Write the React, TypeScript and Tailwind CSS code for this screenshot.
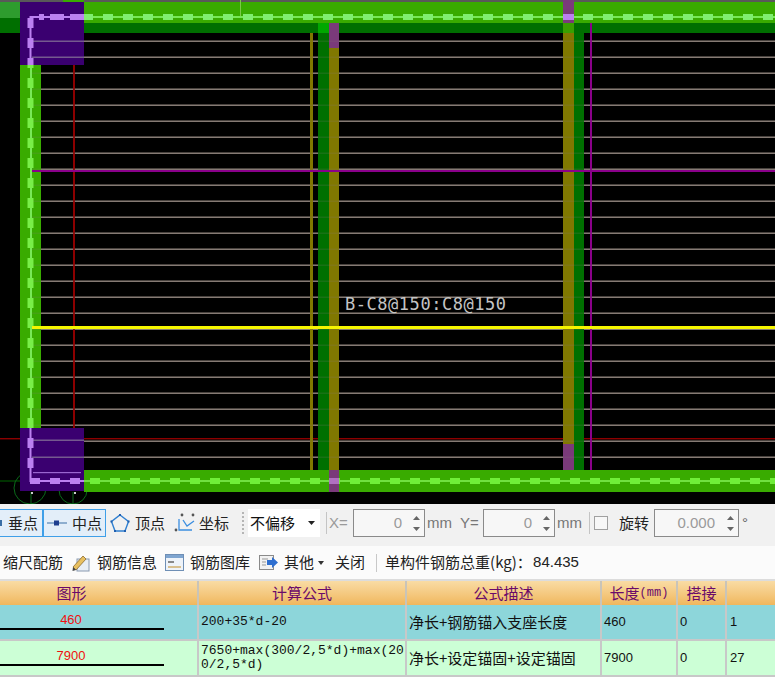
import React from "react";

const cjk = "font-['Microsoft_YaHei','Noto_Sans_CJK_SC',sans-serif]";
const latin = "font-['Liberation_Sans',sans-serif]";

const railLines = Array.from({ length: 27 }, (_, i) => 41 + i * 16);

// the CAD view, drawn as one picture
const CadCanvas = () => (
  <svg width="775" height="504" viewBox="0 0 775 504" className="block shrink-0 bg-black">
    {/* thin grey bars */}
    {railLines.map((y) => (
      <rect key={y} x="32" y={y - 0.5} width="743" height="1.5" fill="#857a74" />
    ))}
    {/* axis lines */}
    <rect x="0" y="438" width="775" height="1.4" fill="#8c0000" />
    <rect x="73" y="65" width="2" height="426" fill="#8c0000" />
    <rect x="0" y="480.5" width="20" height="1" fill="#006400" />

    {/* dimension arcs */}
    <g fill="none" stroke="#0a6a1a" strokeWidth="1">
      <circle cx="30" cy="488" r="16" />
      <circle cx="73" cy="490" r="14" />
      <line x1="31" y1="492" x2="31" y2="504" />
      <line x1="73" y1="492" x2="73" y2="504" />
    </g>

    {/* top beam */}
    <rect x="0" y="0" width="775" height="2" fill="#595959" />
    <rect x="63" y="0" width="21" height="2" fill="#39ab00" />
    <rect x="0" y="2" width="20" height="16" fill="#2e9c2e" />
    <rect x="0" y="18" width="20" height="15" fill="#006f00" />
    <rect x="20" y="2" width="755" height="21" fill="#39ab00" />
    <rect x="20" y="23" width="755" height="10" fill="#006f00" />
    <rect x="240" y="0" width="1" height="17" fill="#7cc84a" />

    {/* left column */}
    <rect x="20" y="65" width="21" height="363" fill="#39ab00" />

    {/* inner columns */}
    <rect x="310" y="33" width="3" height="437" fill="#807800" />
    <rect x="318" y="33" width="11" height="437" fill="#007000" />
    <rect x="318" y="23" width="11" height="10" fill="#00a800" />
    <rect x="329" y="48" width="10" height="422" fill="#807800" />
    <rect x="329" y="23" width="10" height="25" fill="#7a3a7a" />
    <rect x="563" y="33" width="11" height="411" fill="#807800" />
    <rect x="563" y="444" width="11" height="26" fill="#7a3a7a" />
    <rect x="563" y="0" width="11" height="23" fill="#7a3a7a" />
    <rect x="563" y="23" width="11" height="10" fill="#39a000" />
    <rect x="574" y="33" width="10" height="437" fill="#007000" />
    <rect x="590" y="23" width="2" height="447" fill="#8a008a" />

    {/* bars showing faintly through the columns */}
    {railLines.map((y) => (
      <rect key={y} x="32" y={y - 0.5} width="743" height="1.5" fill="#857a74" fillOpacity="0.18" />
    ))}

    {/* bottom beam */}
    <rect x="84" y="470" width="691" height="22" fill="#39ab00" />
    <rect x="329" y="470" width="10" height="22" fill="#7a3a7a" />

    {/* corner columns */}
    <rect x="20" y="2" width="64" height="63" fill="#3a0070" />
    <rect x="20" y="428" width="64" height="63" fill="#3a0070" />
    {[41, 57, 440, 457].map((y) => (
      <rect key={y} x="32" y={y - 0.5} width="52" height="1.5" fill="#75598f" />
    ))}
    <rect x="33" y="472" width="48" height="1.2" fill="#9a66d0" />

    {/* rebar, green parts */}
    <rect x="84" y="16" width="691" height="2" fill="#78e858" />
    <line x1="84" y1="17" x2="775" y2="17" stroke="#80ee70" strokeWidth="6" strokeDasharray="10 10" strokeDashoffset="1" />
    <rect x="30" y="65" width="2" height="363" fill="#78e858" />
    <line x1="30.5" y1="65" x2="30.5" y2="428" stroke="#78ee48" strokeWidth="6" strokeDasharray="10 10" strokeDashoffset="7" />
    <rect x="84" y="480" width="691" height="2" fill="#70e040" />
    <line x1="84" y1="481" x2="775" y2="481" stroke="#70ee38" strokeWidth="6" strokeDasharray="10 10" strokeDashoffset="-6" />

    {/* rebar, corner parts */}
    <path d="M84 17H30.5V65M30.5 428V481H84" fill="none" stroke="#bb80f0" strokeWidth="2" />
    <line x1="84" y1="17" x2="39" y2="17" stroke="#bb80f0" strokeWidth="6" strokeDasharray="14 6" />
    <line x1="30.5" y1="18" x2="30.5" y2="65" stroke="#bb80f0" strokeWidth="6" strokeDasharray="10 10" />
    <line x1="30.5" y1="438" x2="30.5" y2="472" stroke="#bb80f0" strokeWidth="6" strokeDasharray="10 10" />
    <line x1="30" y1="481" x2="84" y2="481" stroke="#bb80f0" strokeWidth="6" strokeDasharray="10 10" />

    <rect x="563" y="14" width="11" height="6" fill="#bb80f0" />
    <rect x="329" y="478" width="10" height="6" fill="#b070c0" />

    <rect x="31" y="492" width="2" height="2" fill="#cccccc" />
    <rect x="74" y="492" width="2" height="2" fill="#cccccc" />

    {/* overlay lines */}
    <rect x="32" y="170" width="743" height="2" fill="#8a008a" />
    <rect x="32" y="326" width="743" height="3" fill="#f5f500" />

    <text
      x="345"
      y="310"
      fill="#c4c4c4"
      fontFamily="'DejaVu Sans Mono', monospace"
      fontSize="17"
      textLength="161"
    >
      B-C8@150:C8@150
    </text>
  </svg>
);

const Spin = () => (
  <span className="flex w-[14px] flex-col items-center gap-[7px]">
    <svg width="7" height="4" viewBox="0 0 7 4"><path d="M0 4L3.5 0L7 4Z" fill="#666" /></svg>
    <svg width="7" height="4" viewBox="0 0 7 4"><path d="M0 0L3.5 4L7 0Z" fill="#666" /></svg>
  </span>
);

const NumberBox = ({ value, width, pad }: { value: string; width: string; pad: string }) => (
  <div className={`flex h-[28px] items-center justify-end border border-[#8a8a8a] bg-[#f7f7f7] pr-[1px] text-[15px] text-[#9a9a9a] ${latin} ${width}`}>
    <span className={pad}>{value}</span>
    <Spin />
  </div>
);

const Snapbar = () => (
  <div className={`flex h-[38px] shrink-0 items-center bg-[#f1f1f1] text-[15px] text-[#222] ${cjk}`}>
    <div className="flex h-[28px] w-[43px] items-center justify-between border border-l-0 border-[#3f9fe8] bg-[#e3eef9] pr-[4px]">
      <span className="h-[6px] w-[2px] bg-[#3a6ea5]" />
      垂点
    </div>
    <div className="flex h-[28px] w-[63px] items-center gap-[5px] border border-[#3f9fe8] bg-[#e3eef9] pl-[3px]">
      <svg width="20" height="6" viewBox="0 0 20 6">
        <rect x="0" y="2.5" width="20" height="1" fill="#3a6ea5" />
        <rect x="7" y="0.5" width="5" height="5" fill="#1f3f8f" />
      </svg>
      中点
    </div>
    <svg width="20" height="20" viewBox="0 0 20 20" className="ml-[4px]">
      <path d="M10 2L18.5 8.5L15 18H5L1.5 8.5Z" fill="none" stroke="#2f7fd0" strokeWidth="1.4" />
      <g fill="#1f5fb0">
        <rect x="9" y="1" width="2" height="2" />
        <rect x="0.5" y="7.5" width="2" height="2" />
        <rect x="17.5" y="7.5" width="2" height="2" />
        <rect x="4" y="17" width="2" height="2" />
        <rect x="14" y="17" width="2" height="2" />
      </g>
    </svg>
    <span className="ml-[5px]">顶点</span>
    <svg width="22" height="20" viewBox="0 0 22 20" className="ml-[9px]">
      <path d="M5 6V17H18M9 7L13 13L20 8" fill="none" stroke="#3b8ee0" strokeWidth="1.3" />
      <circle cx="8" cy="2" r="1.4" fill="#555" />
      <circle cx="19" cy="2" r="1.4" fill="#555" />
      <circle cx="2" cy="17" r="1.4" fill="#555" />
    </svg>
    <span className="ml-[3px]">坐标</span>
    <span className="ml-[13px] h-[22px] w-0 border-l-2 border-dotted border-[#b5b5b5]" />
    <div className="ml-[4px] flex h-[28px] w-[72px] items-center justify-between bg-white pl-[2px] pr-[5px] text-[#111]">
      不偏移
      <svg width="7" height="4" viewBox="0 0 7 4"><path d="M0 0H7L3.5 4Z" fill="#222" /></svg>
    </div>
    <span className="ml-[6px] h-[22px] w-px bg-[#c4c4c4]" />
    <span className={`ml-[2px] w-[24px] text-[#9a9a9a] ${latin}`}>X=</span>
    <NumberBox value="0" width="w-[72px]" pad="mr-[7px]" />
    <span className={`ml-[2px] w-[33px] text-[#777] ${latin}`}>mm</span>
    <span className={`w-[23px] text-[#777] ${latin}`}>Y=</span>
    <NumberBox value="0" width="w-[72px]" pad="mr-[7px]" />
    <span className={`ml-[2px] w-[32px] text-[#777] ${latin}`}>mm</span>
    <span className="h-[22px] w-px bg-[#c4c4c4]" />
    <span className="ml-[4px] h-[14px] w-[14px] border border-[#a0a0a0] bg-[#f7f7f7]" />
    <span className="ml-[11px]">旋转</span>
    <NumberBox value="0.000" width="ml-[5px] w-[85px]" pad="mr-[8px]" />
    <span className={`ml-[3px] self-start pt-[8px] text-[#666] ${latin}`}>°</span>
  </div>
);

const Infobar = () => (
  <div className="flex h-[37px] shrink-0 flex-col">
    <div className="h-[4px] bg-[#f1f1f1]" />
    <div className={`flex flex-1 items-center bg-[#fbfbfb] text-[15px] text-[#222] ${cjk}`}>
      <span className="ml-[3px]">缩尺配筋</span>
      <svg width="18" height="18" viewBox="0 0 18 18" className="ml-[9px]">
        <rect x="5" y="5" width="12" height="12" fill="#e8eef5" stroke="#8a9ab0" />
        <path d="M1 13L11 2L14 5L4 16Z" fill="#e8c060" stroke="#8a6a30" strokeWidth="0.8" />
        <path d="M1 13L4 16L0.5 17Z" fill="#444" />
      </svg>
      <span className="ml-[7px]">钢筋信息</span>
      <svg width="19" height="17" viewBox="0 0 19 17" className="ml-[8px]">
        <rect x="0.5" y="0.5" width="18" height="16" fill="#eef3f9" stroke="#6f8fb5" />
        <rect x="1" y="1" width="17" height="3" fill="#7fa5d0" />
        <rect x="3" y="7" width="6" height="2" fill="#888" />
        <rect x="3" y="12" width="13" height="2" fill="#d8c090" />
      </svg>
      <span className="ml-[6px]">钢筋图库</span>
      <svg width="19" height="17" viewBox="0 0 19 17" className="ml-[9px]">
        <rect x="0.5" y="1.5" width="14" height="14" fill="#f2f2f2" stroke="#8a8a8a" />
        <path d="M3 5H9M3 8H7M3 11H7" stroke="#999" />
        <path d="M8 6H13V3L19 8.5L13 14V11H8Z" fill="#2f6fd0" />
      </svg>
      <span className="ml-[6px]">其他</span>
      <svg width="6" height="4" viewBox="0 0 6 4" className="ml-[4px]"><path d="M0 0H6L3 4Z" fill="#333" /></svg>
      <span className="ml-[11px]">关闭</span>
      <span className="ml-[11px] h-[18px] w-px bg-[#c8c8c8]" />
      <span className="ml-[8px] w-[148px] whitespace-nowrap">单构件钢筋总重(kg)：</span>
      <span className={latin}>84.435</span>
    </div>
  </div>
);

const gridCols = "grid grid-cols-[199px_208px_195px_76px_49px_48px]";
const cellBorder = "border-r-2 border-[#c8c8c8]";
const headCell = "flex items-center justify-center border-r-2 border-[#c9c4b8]";

const TableHeader = () => (
  <div className={`${gridCols} h-[26px] shrink-0 border-t-[2px] border-[#dcdcdc] bg-gradient-to-b from-[#f9dca4] to-[#f0b75c] text-[15px] text-[#6a0a6a] ${cjk}`}>
    <div className={`${headCell} pr-[54px]`}>图形</div>
    <div className={headCell}>计算公式</div>
    <div className={headCell}>公式描述</div>
    <div className={headCell}>
      长度<span className="font-['Liberation_Mono',monospace] text-[12px] leading-[15px]">(mm)</span>
    </div>
    <div className={headCell}>搭接</div>
    <div />
  </div>
);

type Row = { shape: string; formula: string; desc: string; len: string; lap: string; count: string; bg: string };

const rows: Row[] = [
  { shape: "460", formula: "200+35*d-20", desc: "净长+钢筋锚入支座长度", len: "460", lap: "0", count: "1", bg: "bg-[#8dd6da]" },
  { shape: "7900", formula: "7650+max(300/2,5*d)+max(200/2,5*d)", desc: "净长+设定锚固+设定锚固", len: "7900", lap: "0", count: "27", bg: "bg-[#ccffd6]" },
];

const TableRow = ({ row }: { row: Row }) => (
  <div className={`${gridCols} h-[36px] shrink-0 border-b-2 border-[#c8c8c8] text-[#111] ${row.bg}`}>
    <div className={`flex flex-col justify-end pb-[9px] ${cellBorder}`}>
      <span className={`w-[142px] text-center text-[13px] leading-[15px] text-[#f01010] ${latin}`}>
        {row.shape}
      </span>
      <span className="mt-[1px] h-[2px] w-[164px] bg-black" />
    </div>
    <div className={`flex items-center pl-[2px] font-['Liberation_Mono',monospace] text-[13px] leading-[14px] break-all ${cellBorder}`}>
      {row.formula}
    </div>
    <div className={`flex items-center whitespace-nowrap pl-[2px] text-[15px] ${cjk} ${cellBorder}`}>{row.desc}</div>
    <div className={`flex items-center pl-[2px] text-[13px] ${latin} ${cellBorder}`}>{row.len}</div>
    <div className={`flex items-center pl-[2px] text-[13px] ${latin} ${cellBorder}`}>{row.lap}</div>
    <div className={`flex items-center pl-[3px] text-[13px] ${latin}`}>{row.count}</div>
  </div>
);

export default function App() {
  return (
    <div className="flex h-[679px] w-[775px] flex-col overflow-hidden bg-white">
      <CadCanvas />
      <Snapbar />
      <Infobar />
      <TableHeader />
      {rows.map((row) => (
        <TableRow key={row.shape} row={row} />
      ))}
    </div>
  );
}
